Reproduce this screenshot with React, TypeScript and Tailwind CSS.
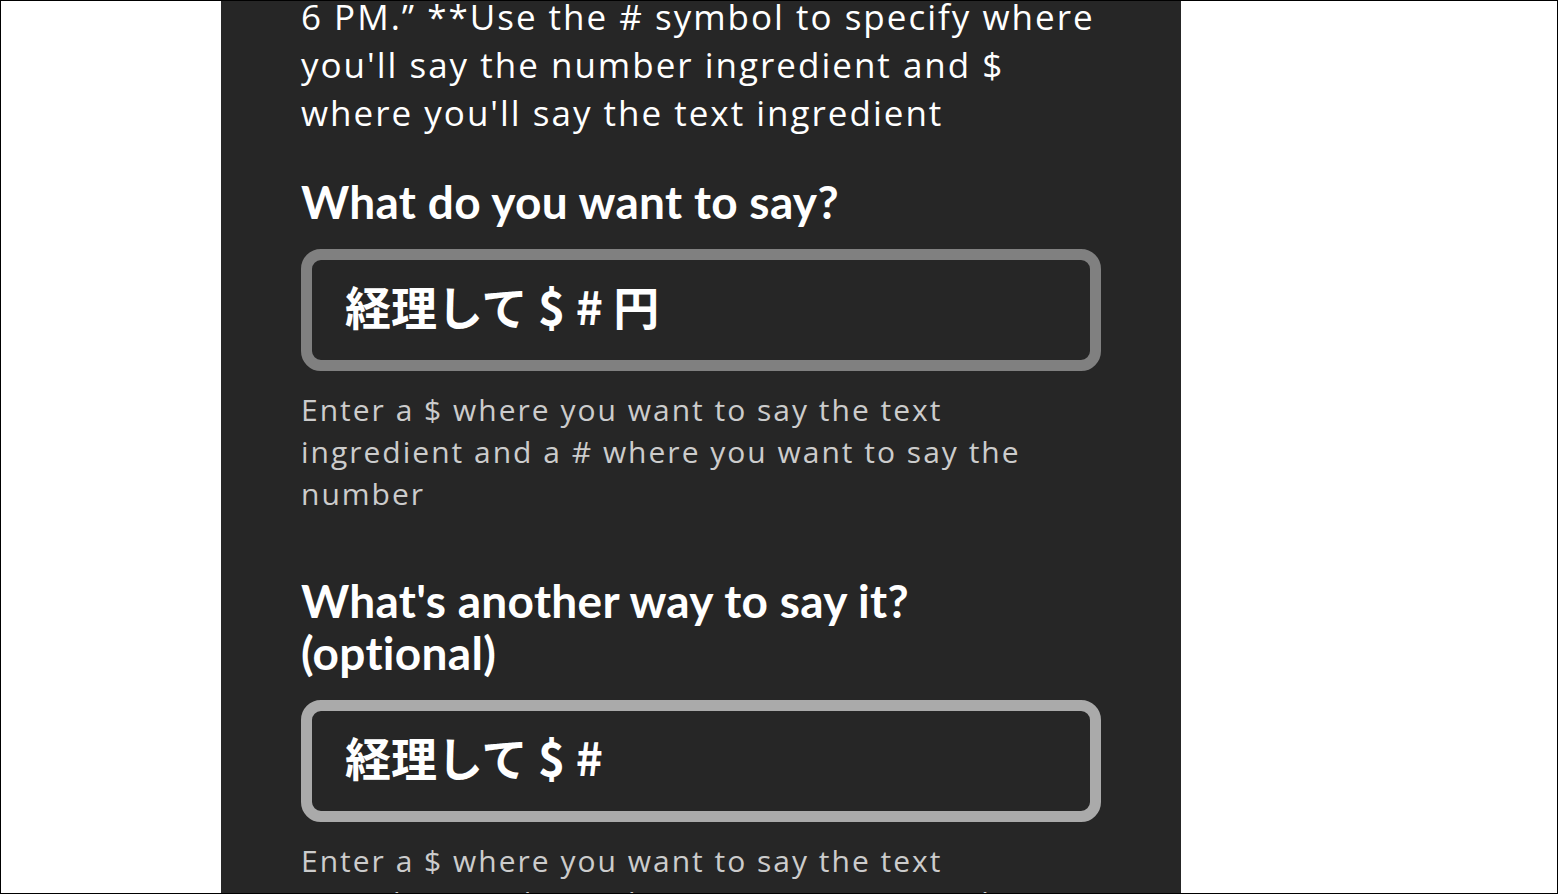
import React from "react";

const latin = { fontFamily: 'Lato, "Noto Sans", sans-serif' };
const reg = { fontFamily: '"Open Sans", "Noto Sans", sans-serif' };
const cjk = { fontFamily: '"Noto Sans CJK JP", "Noto Sans", sans-serif' };

function Field({ value, borderClass }: { value: string; borderClass: string }) {
  return (
    <div
      className={`flex h-[122px] w-[800px] items-center rounded-[20px] border-[11px] ${borderClass} bg-[#262626] pb-[10px] pl-[33px]`}
    >
      <span className="text-[46px] font-bold leading-none text-white" style={cjk}>
        {value}
      </span>
    </div>
  );
}

function Help() {
  return (
    <p className="mt-[18px] text-[30px] leading-[42px] tracking-[2px] text-[#cccccc]" style={reg}>
      Enter a $ where you want to say the text
      <br />
      ingredient and a # where you want to say the
      <br />
      number
    </p>
  );
}

export default function App() {
  return (
    <div className="box-border flex h-[894px] w-full overflow-hidden border border-black bg-white">
      <div className="ml-[220px] w-[960px] shrink-0 bg-[#262626] px-[80px]" style={latin}>
        <p className="-mt-[8px] text-[35px] leading-[48px] tracking-[2px] text-white" style={reg}>
          6 PM.” **Use the # symbol to specify where
          <br />
          you'll say the number ingredient and $
          <br />
          where you'll say the text ingredient
        </p>

        <h2 className="mt-[39px] text-[46px] font-bold leading-[52px] tracking-[0.3px] text-white">
          What do you want to say?
        </h2>
        <div className="mt-[21px]">
          <Field value="経理して $ # 円" borderClass="border-[#808080]" />
        </div>
        <Help />

        <h2 className="mt-[60px] text-[46px] font-bold leading-[52px] tracking-[0.3px] text-white">
          What's another way to say it?
          <br />
          (optional)
        </h2>
        <div className="mt-[21px]">
          <Field value="経理して $ #" borderClass="border-[#aaaaaa]" />
        </div>
        <Help />
      </div>
    </div>
  );
}
